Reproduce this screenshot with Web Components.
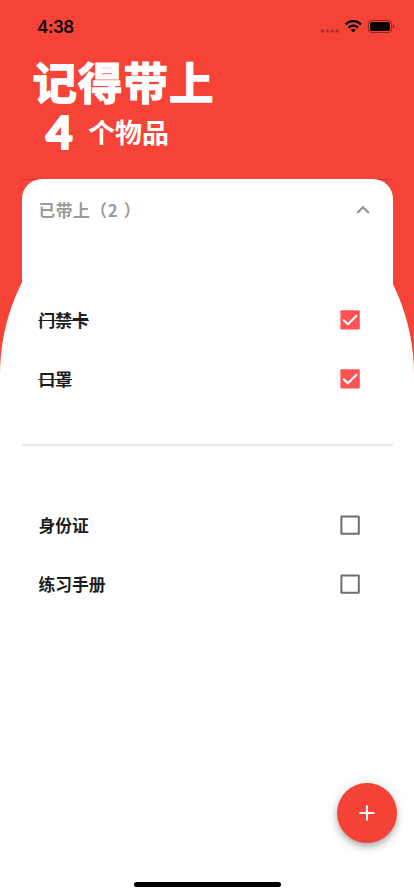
<!DOCTYPE html>
<html lang="zh-CN">
<head>
<meta charset="utf-8">
<meta name="viewport" content="width=device-width">
<title>记得带上</title>
<style>
body{margin:0;background:#fff;font-family:"Noto Sans CJK SC",sans-serif}
</style>
</head>
<body>
<packing-app></packing-app>
<script>
const define = (name, html, setup) => customElements.define(name, class extends HTMLElement {
  constructor() {
    super();
    const t = document.createElement('template');
    t.innerHTML = html;
    this.attachShadow({mode: 'open'}).append(t.content.cloneNode(true));
  }
  connectedCallback() { if (setup) setup(this); }
});

define('status-bar', `
<style>
:host{display:flex;height:54px;box-sizing:border-box;padding:17px 19px 0 37px;justify-content:space-between;align-items:flex-start;color:#0b0000}
.time{font:600 17px/20px Inter,sans-serif;letter-spacing:-.4px}
svg{display:block}
</style>
<span class="time"><slot></slot></span>
<svg width="76" height="20" viewBox="319 17 76 20">
  <g fill="#000" fill-opacity=".3"><circle cx="322.5" cy="31" r="1.75"/><circle cx="327.4" cy="31" r="1.75"/><circle cx="332.3" cy="31" r="1.75"/><circle cx="337.2" cy="31" r="1.75"/></g>
  <g fill="none" stroke="#0b0000" stroke-width="2.3"><path d="M345.6 24.3a11.1 11.1 0 0 1 15.4 0"/><path d="M348.5 27.6a6.9 6.9 0 0 1 9.6 0"/></g>
  <path d="M350.9 29.9a3.5 3.5 0 0 1 4.8 0l-2.4 2.5z" fill="#0b0000"/>
  <rect x="368.4" y="20.5" width="23.2" height="12" rx="3.4" fill="none" stroke="#000" stroke-opacity=".42"/>
  <rect x="370" y="22.1" width="20" height="8.8" rx="1.9" fill="#0b0000"/>
  <path d="M393 24.6q1.3.5 1.3 1.9t-1.3 1.9z" fill="#000" fill-opacity=".45"/>
</svg>`);

define('packing-title', `
<style>
:host{display:block;height:125px;padding-left:32.5px;color:#fff;font-weight:900}
h1{margin:0;font-size:44.5px;line-height:53px;letter-spacing:1px;-webkit-text-stroke:1.3px #fff}
p{margin:0;display:flex;align-items:center;height:50px;padding-left:13.5px}
.n{font:900 46px/50px Lato,sans-serif;width:42px;-webkit-text-stroke:2px #fff}
.u{font-size:27px;line-height:40px;font-weight:700}
</style>
<h1><slot name="title"></slot></h1>
<p><span class="n"><slot name="count"></slot></span><span class="u"><slot name="unit"></slot></span></p>`);

define('check-box', `
<style>
:host{display:block;width:20px;height:20px}
svg{display:block}
.on{display:none}
:host([checked]) .on{display:block}
:host([checked]) .off{display:none}
</style>
<svg width="20" height="20" viewBox="0 0 20 20">
  <g class="on"><rect x=".4" y=".2" width="19.4" height="19.4" rx="1" fill="#ff5252"/><path d="M3.2 9.8 7.9 14.2 17 5.2" fill="none" stroke="#fff" stroke-width="2.2"/></g>
  <rect class="off" x="1.4" y="1.4" width="17.4" height="17.4" rx=".3" fill="none" stroke="#6e6e6e" stroke-width="2"/>
</svg>`);

define('check-item', `
<style>
:host{display:flex;height:59.3px;align-items:center;justify-content:space-between;padding:0 32.5px 0 17px;color:#1d1d1d;font-size:16.8px;font-weight:700;line-height:24px}
:host([checked]) .label{text-decoration:line-through;text-decoration-thickness:1.3px}
</style>
<span class="label"><slot></slot></span><check-box></check-box>`,
el => el.shadowRoot.querySelector('check-box').toggleAttribute('checked', el.hasAttribute('checked')));

define('packed-panel', `
<style>
:host{display:block;box-sizing:border-box;margin:0 21.5px;height:267px;background:#fff;border-radius:20px 20px 0 0;border-bottom:2px solid #e9e9e9}
header{display:flex;height:62px;align-items:center;justify-content:space-between;padding:0 22px 0 17px;color:#9b9b9b;font-size:16.8px;font-weight:700;line-height:24px;word-spacing:1.3px}
.body{padding-top:49px}
::slotted(span){letter-spacing:.5px}
</style>
<header><slot name="heading"></slot>
<svg width="16" height="12" viewBox="0 0 16 12"><path d="M2.2 9 8 3.2 13.8 9" fill="none" stroke="#929292" stroke-width="2"/></svg></header>
<div class="body"><slot></slot></div>`);

define('todo-list', `
<style>:host{display:block;margin:0 21.5px;padding-top:49.3px}</style><slot></slot>`);

define('add-button', `
<style>
:host{display:grid;place-items:center;width:60px;height:60px;border-radius:50%;background:#f44336;box-shadow:0 3px 5px -1px #0003,0 5px 9px #00000024,0 1px 14px #0000001a}
</style>
<svg width="16" height="16" viewBox="0 0 16 16"><path d="M8 .5v15M.5 8h15" stroke="#fff" stroke-width="2"/></svg>`);

define('hero-shape', `
<style>:host{display:block;height:375px}svg{display:block}</style>
<svg width="414" height="375" viewBox="0 0 414 375"><path d="M0 0H414V375A207 207 0 0 0 0 375Z" fill="#f54437"/><path d="M0 0H414V190H0Z" fill="#f54437"/><path d="M22 179.5H392" stroke="#000" stroke-opacity=".16"/></svg>`);

define('packing-app', `
<style>
:host{display:grid;width:414px;height:896px;overflow:hidden;background:#fff}
hero-shape,main,add-button,.home{grid-area:1/1}
main{min-width:0}
add-button{align-self:end;justify-self:end;margin:0 17px 53px 0}
.home{align-self:end;justify-self:center;width:147px;height:5px;border-radius:3px;background:#000;margin-bottom:9px}
</style>
<hero-shape></hero-shape>
<main>
  <status-bar>4:38</status-bar>
  <packing-title><span slot="title">记得带上</span><span slot="count">4</span><span slot="unit">个物品</span></packing-title>
  <packed-panel><span slot="heading">已带上（2 ）</span>
    <check-item checked>门禁卡</check-item>
    <check-item checked>口罩</check-item>
  </packed-panel>
  <todo-list>
    <check-item>身份证</check-item>
    <check-item>练习手册</check-item>
  </todo-list>
</main>
<add-button></add-button>
<div class="home"></div>`);
</script>
</body>
</html>
